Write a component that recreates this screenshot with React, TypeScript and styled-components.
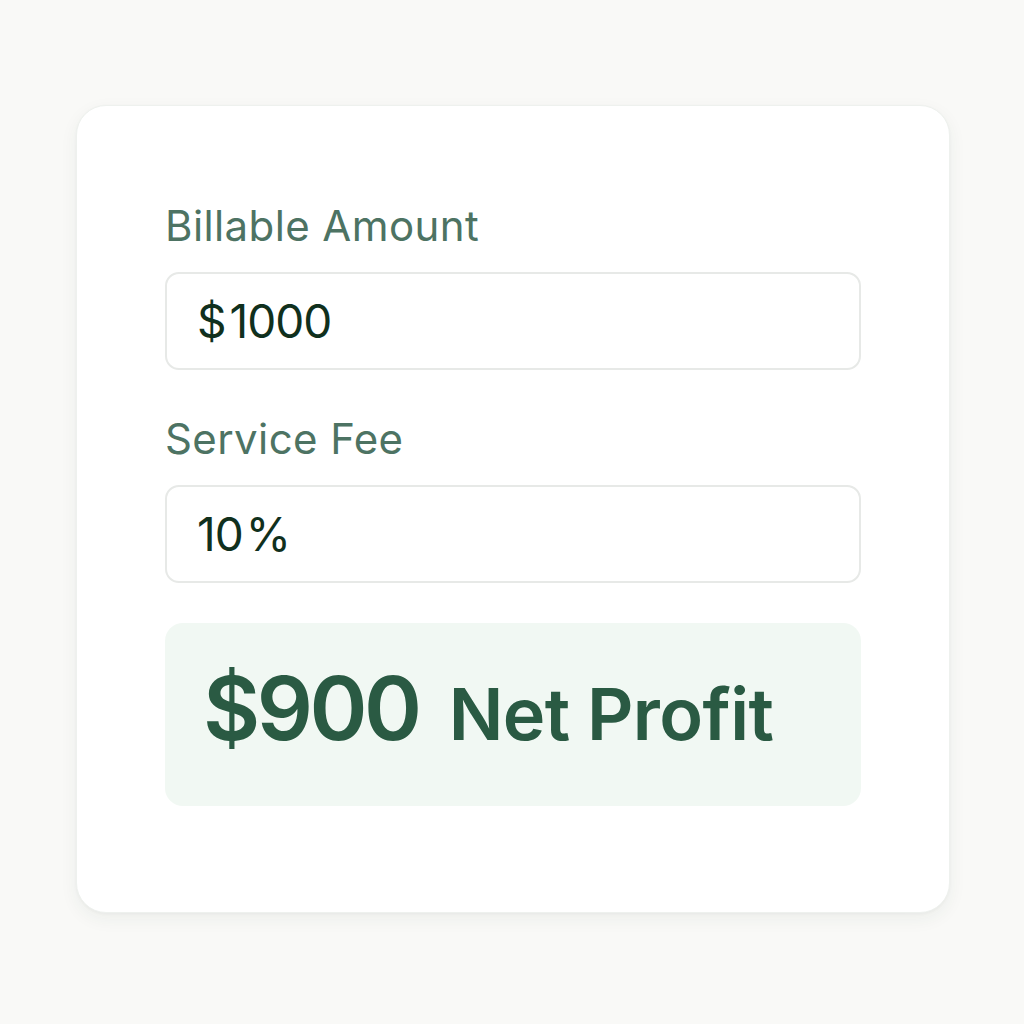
import React from "react";
import styled, { createGlobalStyle } from "styled-components";

const Global = createGlobalStyle`
  html, body { margin: 0; padding: 0; background: #f9f9f7; }
  body { font-family: Inter, "Noto Sans", sans-serif; -webkit-font-smoothing: antialiased; }
`;

const Page = styled.div`
  width: 1024px;
  height: 1024px;
  box-sizing: border-box;
  padding: 105px 74px 0 76px;
`;

const Card = styled.div`
  box-sizing: border-box;
  width: 874px;
  height: 808px;
  background: #ffffff;
  border: 1px solid #eef1ee;
  border-radius: 30px;
  box-shadow: 0 6px 18px rgba(40, 60, 50, 0.06), 0 1px 3px rgba(40, 60, 50, 0.04);
  padding: 99px 88px 0 88px;
  display: flex;
  flex-direction: column;
`;

const Label = styled.div<{ $top: number }>`
  font-size: 42px;
  line-height: 42px;
  color: #4d7363;
  font-weight: 400;
  margin-top: ${(p) => p.$top}px;
  letter-spacing: 0.4px;
`;

const Input = styled.div`
  box-sizing: border-box;
  height: 98px;
  margin-top: 25px;
  border: 2px solid #e7e9e7;
  border-radius: 14px;
  display: flex;
  align-items: center;
  padding-left: 30px;
  font-size: 46px;
  color: #10301d;
  letter-spacing: -1px;
`;

const Sym = styled.span<{ $before?: boolean }>`
  margin: ${(p) => (p.$before ? "0 4px 0 0" : "0 0 0 3px")};
`;

const Result = styled.div`
  box-sizing: border-box;
  height: 183px;
  margin-top: 40px;
  background: #f1f8f3;
  border-radius: 18px;
  display: flex;
  align-items: baseline;
  padding: 35px 0 0 38px;
  gap: 30px;
  color: #2a5a43;
  font-weight: 600;
`;

const Big = styled.span`
  font-size: 88px;
  line-height: 100px;
  letter-spacing: -3.5px;
`;

const Mid = styled.span`
  font-size: 72px;
  line-height: 100px;
  letter-spacing: -0.6px;
`;

export default function App() {
  return (
    <>
      <Global />
      <Page>
        <Card>
          <Label $top={0}>Billable Amount</Label>
          <Input>
            <Sym $before>$</Sym>1000
          </Input>
          <Label $top={48}>Service Fee</Label>
          <Input>
            10<Sym>%</Sym>
          </Input>
          <Result>
            <Big>$900</Big>
            <Mid>Net Profit</Mid>
          </Result>
        </Card>
      </Page>
    </>
  );
}
